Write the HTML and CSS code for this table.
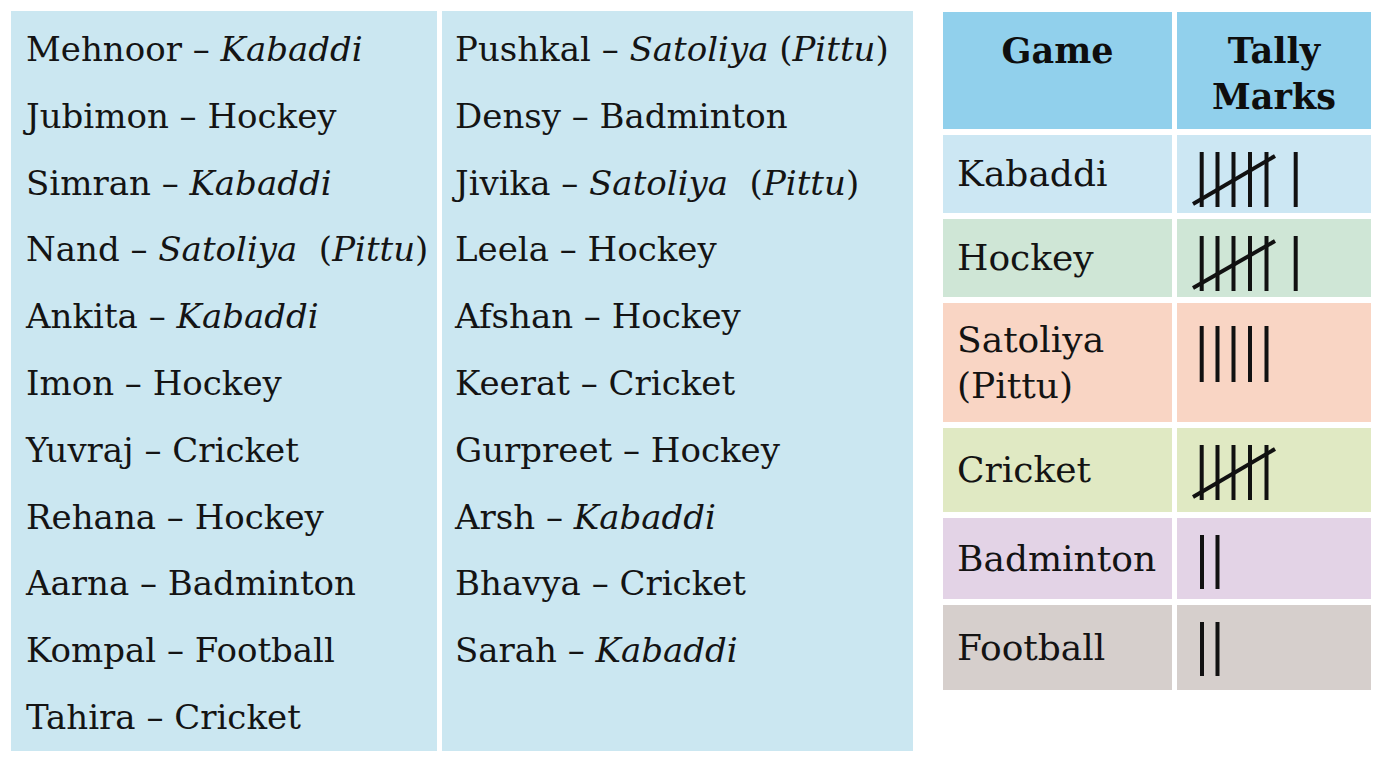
FILE: index.html
```html
<!DOCTYPE html>
<html lang="en">
<head>
<meta charset="utf-8">
<title>Games and Tally Marks</title>
<link rel="stylesheet" href="styles.css">
</head>
<body>
<main class="page">
  <section class="lists">
    <ul class="list list--left">
      <li>Mehnoor – <em>Kabaddi</em></li>
      <li>Jubimon – Hockey</li>
      <li>Simran – <em>Kabaddi</em></li>
      <li>Nand – <em>Satoliya</em>&nbsp; (<em>Pittu</em>)</li>
      <li>Ankita – <em>Kabaddi</em></li>
      <li>Imon – Hockey</li>
      <li>Yuvraj – Cricket</li>
      <li>Rehana – Hockey</li>
      <li>Aarna – Badminton</li>
      <li>Kompal – Football</li>
      <li>Tahira – Cricket</li>
    </ul>
    <ul class="list list--right">
      <li>Pushkal – <em>Satoliya</em> (<em>Pittu</em>)</li>
      <li>Densy – Badminton</li>
      <li>Jivika – <em>Satoliya</em>&nbsp; (<em>Pittu</em>)</li>
      <li>Leela – Hockey</li>
      <li>Afshan – Hockey</li>
      <li>Keerat – Cricket</li>
      <li>Gurpreet – Hockey</li>
      <li>Arsh – <em>Kabaddi</em></li>
      <li>Bhavya – Cricket</li>
      <li>Sarah – <em>Kabaddi</em></li>
    </ul>
  </section>

  <section class="tally">
    <div class="cell head">Game</div>
    <div class="cell head">Tally<br>Marks</div>

    <div class="cell name row-kabaddi">Kabaddi</div>
    <div class="cell marks row-kabaddi">
      <svg class="tally-svg" width="112" height="60" viewBox="0 0 112 60">
        <g stroke="#111" stroke-width="4" stroke-linecap="butt">
          <line x1="10.7" y1="2" x2="10.7" y2="57"/>
          <line x1="26.5" y1="2" x2="26.5" y2="57"/>
          <line x1="42.5" y1="2" x2="42.5" y2="57"/>
          <line x1="59" y1="2" x2="59" y2="57"/>
          <line x1="75.5" y1="2" x2="75.5" y2="57"/>
          <line x1="2" y1="54" x2="84" y2="6"/>
          <line x1="104.7" y1="2" x2="104.7" y2="57"/>
        </g>
      </svg>
    </div>

    <div class="cell name row-hockey">Hockey</div>
    <div class="cell marks row-hockey">
      <svg class="tally-svg" width="112" height="60" viewBox="0 0 112 60">
        <g stroke="#111" stroke-width="4">
          <line x1="10.7" y1="2" x2="10.7" y2="57"/>
          <line x1="26.5" y1="2" x2="26.5" y2="57"/>
          <line x1="42.5" y1="2" x2="42.5" y2="57"/>
          <line x1="59" y1="2" x2="59" y2="57"/>
          <line x1="75.5" y1="2" x2="75.5" y2="57"/>
          <line x1="2" y1="54" x2="84" y2="7"/>
          <line x1="104.7" y1="2" x2="104.7" y2="57"/>
        </g>
      </svg>
    </div>

    <div class="cell name row-satoliya">Satoliya<br>(Pittu)</div>
    <div class="cell marks marks--deep row-satoliya">
      <svg class="tally-svg" width="112" height="60" viewBox="0 0 112 60">
        <g stroke="#111" stroke-width="4">
          <line x1="10.7" y1="2" x2="10.7" y2="58"/>
          <line x1="26.5" y1="2" x2="26.5" y2="58"/>
          <line x1="42.5" y1="2" x2="42.5" y2="58"/>
          <line x1="59" y1="2" x2="59" y2="58"/>
          <line x1="75.5" y1="2" x2="75.5" y2="58"/>
        </g>
      </svg>
    </div>

    <div class="cell name row-cricket">Cricket</div>
    <div class="cell marks row-cricket">
      <svg class="tally-svg" width="112" height="60" viewBox="0 0 112 60">
        <g stroke="#111" stroke-width="4">
          <line x1="10.7" y1="2" x2="10.7" y2="57"/>
          <line x1="26.5" y1="2" x2="26.5" y2="57"/>
          <line x1="42.5" y1="2" x2="42.5" y2="57"/>
          <line x1="59" y1="2" x2="59" y2="57"/>
          <line x1="75.5" y1="2" x2="75.5" y2="57"/>
          <line x1="2" y1="54" x2="84" y2="6"/>
        </g>
      </svg>
    </div>

    <div class="cell name row-badminton">Badminton</div>
    <div class="cell marks row-badminton">
      <svg class="tally-svg" width="112" height="60" viewBox="0 0 112 60">
        <g stroke="#111" stroke-width="4">
          <line x1="11" y1="2" x2="11" y2="56"/>
          <line x1="26.5" y1="2" x2="26.5" y2="56"/>
        </g>
      </svg>
    </div>

    <div class="cell name row-football">Football</div>
    <div class="cell marks row-football">
      <svg class="tally-svg" width="112" height="60" viewBox="0 0 112 60">
        <g stroke="#111" stroke-width="4">
          <line x1="11" y1="2" x2="11" y2="56"/>
          <line x1="26.5" y1="2" x2="26.5" y2="56"/>
        </g>
      </svg>
    </div>
  </section>
</main>
</body>
</html>
```

FILE: styles.css
```css
* {
  box-sizing: border-box;
}

html, body {
  margin: 0;
  padding: 0;
  background: #ffffff;
}

body {
  width: 1379px;
  height: 768px;
  overflow: hidden;
  font-family: "DejaVu Serif", "Liberation Serif", serif;
  color: #141414;
}

.page {
  display: flex;
  align-items: flex-start;
  padding: 11px 0 0 11px;
}

.lists {
  display: flex;
  gap: 5px;
}

.list {
  list-style: none;
  margin: 0;
  height: 740px;
  background: #cbe7f1;
  padding: 5px 0 0 15px;
  font-size: 34px;
  line-height: 66.8px;
  white-space: nowrap;
}

.list--left {
  width: 426px;
}

.list--right {
  width: 471px;
  padding-left: 13px;
}

.list em {
  font-style: italic;
}

.tally {
  margin-left: 30px;
  margin-top: 1px;
  display: grid;
  grid-template-columns: 229px 194px;
  grid-template-rows: 117px 78px 78px 119px 84px 81px 85px;
  column-gap: 5px;
  row-gap: 6px;
}

.cell {
  display: flex;
}

.head {
  background: #91d0ec;
  justify-content: center;
  text-align: center;
  font-weight: bold;
  font-size: 35px;
  line-height: 46px;
  padding-top: 16px;
  color: #0e0e0e;
}

.name {
  align-items: center;
  padding-left: 14px;
  font-size: 36px;
  line-height: 46px;
  color: #131313;
}

.marks {
  align-items: flex-start;
  padding: 15px 0 0 14px;
}

.marks--deep {
  padding-top: 21px;
}

.tally-svg {
  display: block;
}

.row-kabaddi { background: #cce7f3; }
.row-hockey { background: #cfe6d6; }
.row-satoliya { background: #f9d5c4; }
.row-cricket { background: #e0e9c3; }
.row-badminton { background: #e3d3e6; }
.row-football { background: #d6cfcc; }
```
